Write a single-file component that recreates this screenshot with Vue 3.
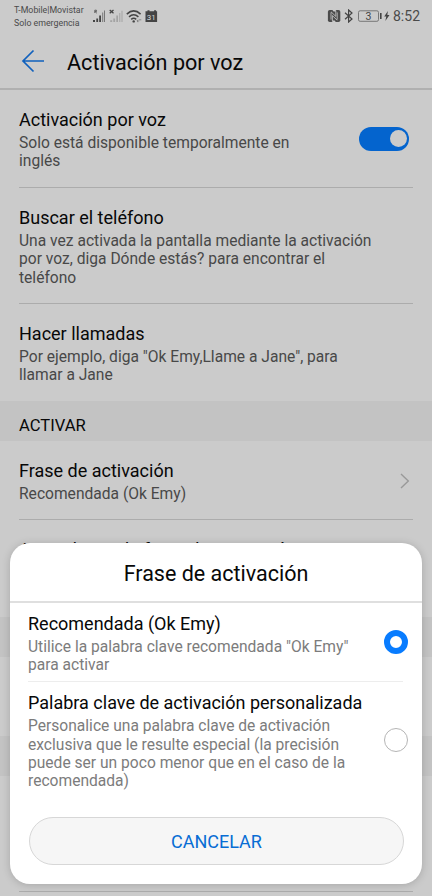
<script setup>
import { ref } from 'vue'

const enabled = ref(true)
const selected = ref('recommended')

const features = [
  { title: 'Activación por voz', lines: ['Solo está disponible temporalmente en', 'inglés'], toggle: true },
  { title: 'Buscar el teléfono', lines: ['Una vez activada la pantalla mediante la activación', 'por voz, diga Dónde estás? para encontrar el', 'teléfono'] },
  { title: 'Hacer llamadas', lines: ['Por ejemplo, diga "Ok Emy,Llame a Jane", para', 'llamar a Jane'] },
]

const options = [
  { id: 'recommended', title: 'Recomendada (Ok Emy)', lines: ['Utilice la palabra clave recomendada "Ok Emy"', 'para activar'] },
  { id: 'custom', title: 'Palabra clave de activación personalizada', lines: ['Personalice una palabra clave de activación', 'exclusiva que le resulte especial (la precisión', 'puede ser un poco menor que en el caso de la', 'recomendada)'] },
]
</script>

<template>
  <div class="screen">
    <header class="status">
      <div class="carrier"><span>T-Mobile|Movistar</span><span>Solo emergencia</span></div>
      <svg class="signals" width="68" height="16" viewBox="0 0 68 16">
        <g fill="#444">
          <path d="M1 11h2v2H1zM4.3 9.5h1.8V13H4.3zM7.2 6.5H9V13H7.2z" />
          <path d="M10.2 3.5h1V13h-1z" fill="#777" /><path d="M12 1.5h1V13h-1z" fill="#777" />
          <path d="M2.8 4V1.2h1.6v1.4H3.2L4.8 4.2" fill="none" stroke="#555" stroke-width=".9" />
        </g>
        <path d="M17.7 1l3.8 3.2M21.5 1l-3.8 3.2" stroke="#444" stroke-width="1.3" />
        <path d="M18.2 11.2h2V13h-2zM21.3 9.5h1.8V13h-1.8zM24.3 6.5H26V13h-1.7zM27.3 4h1v9h-1zM29.5 1.8h1V13h-1z" fill="#a3a3a3" />
        <g fill="none" stroke="#444" stroke-width="1.5">
          <path d="M34.8 5.1Q41.7-1.3 48.6 5.1M37 7.9Q41.7 3.7 46.4 7.9M39.2 10.4Q41.7 8.2 44.2 10.4" />
        </g>
        <circle cx="41.7" cy="12.4" r="1.2" fill="#444" />
        <path d="M45 12h2.2M46.1 10.8L44.9 12l1.2 1.2M49.3 10.8h-2.2" stroke="#777" stroke-width=".8" fill="none" />
        <path d="M53.5 2.2h2V1.2h2v1h4.6v-1h2v1h1V13H53.5z" fill="#444" />
        <text x="59.3" y="10.7" text-anchor="middle" class="day">31</text>
      </svg>
      <div class="right">
        <svg width="64" height="14" viewBox="0 0 64 14">
          <rect x=".9" y="1" width="12.4" height="12" rx="1.8" fill="#4b4b4b" />
          <path d="M5.4 .9h3.4v1.5H6.6zM5.4 13.1h3.4l-1.2-1.5H5.4z" fill="#cbcbcb" />
          <path d="M4 10.6V3.4M5.4 12.5V6.6l4.8 4.6M10.2 10.6V3.4M8.8 1.5v5.9L4 2.8" fill="none" stroke="#cbcbcb" stroke-width=".8" />
          <path d="M18 3.7l7 6.3-3.4 3V1L25 4l-7 6.3" fill="none" stroke="#444" stroke-width="1.2" />
          <rect x="31.5" y="1.8" width="20" height="10.5" rx="1.6" fill="none" stroke="#777" stroke-width="1" />
          <path d="M53 4h1.6v6H53z" fill="#444" />
          <path d="M60.9 2l-3.7 5.5h2.1L58.3 12l4.2-6h-2.2z" fill="#444" />
          <text x="41.5" y="10.8" text-anchor="middle" class="charge">3</text>
        </svg>
        <span class="clock">8:52</span>
      </div>
    </header>
    <div class="appbar">
      <svg width="24" height="24" viewBox="0 0 24 24"><path d="M23 12H2M12.5 1.5L2 12l10.5 10.5" fill="none" stroke="#1161bd" stroke-width="1.7" /></svg>
      <h1>Activación por voz</h1>
    </div>

    <main>
      <section v-for="(f, i) in features" :key="f.title" class="row" :class="'feature-' + i">
        <div>
          <h2>{{ f.title }}</h2>
          <p v-for="line in f.lines" :key="line">{{ line }}</p>
        </div>
        <button v-if="f.toggle" class="switch" :class="{ on: enabled }" @click="enabled = !enabled"><i></i></button>
      </section>
      <div class="band label">ACTIVAR</div>
      <section class="row phrase">
        <div><h2>Frase de activación</h2><p>Recomendada (Ok Emy)</p></div>
        <svg width="12" height="18" viewBox="0 0 12 18"><path d="M2 2l7.3 7L2 16" fill="none" stroke="#999" stroke-width="1.4" /></svg>
      </section>
      <section class="row learn"><h2>Aprendizaje de frase de activación</h2></section>
      <div class="band"></div>
      <div class="gap"></div>
      <div class="band"></div>
      <div class="row last"></div>
    </main>

    <div class="dialog">
      <h3>Frase de activación</h3>
      <div class="options">
        <div v-for="o in options" :key="o.id" class="option" @click="selected = o.id">
          <div class="text">
            <h2>{{ o.title }}</h2>
            <p v-for="line in o.lines" :key="line">{{ line }}</p>
          </div>
          <span class="radio" :class="{ checked: selected === o.id }"></span>
        </div>
      </div>
      <button class="cancel">CANCELAR</button>
    </div>
  </div>
</template>

<style>
body { margin: 0; }
</style>

<style scoped>
* { box-sizing: border-box; }
.screen { position: relative; width: 432px; height: 896px; overflow: hidden; background: #cbcbcb; font-family: Roboto, "Liberation Sans", sans-serif; color: #080808; }
h1, h2, h3, p { margin: 0; font-weight: 400; white-space: nowrap; }
h2 { font-size: 18px; line-height: 22px; margin-bottom: 3px; }
p { font-size: 15.6px; line-height: 18.4px; color: #484848; }
button { border: 0; padding: 0; font-family: inherit; }
.status { height: 34px; display: flex; align-items: flex-start; padding: 4px 12px 0 14px; color: #4a4a4a; }
.carrier { width: 70px; display: flex; flex-direction: column; font-size: 8.8px; line-height: 13px; white-space: nowrap; }
.signals { margin: 5px 0 0 8px; }
.day { font-size: 8px; fill: #d8d8d8; }
.right { margin-left: auto; display: flex; align-items: center; gap: 2px; height: 24px; }
.charge { font-size: 10.5px; fill: #444; }
.clock { font-size: 14px; }
.appbar { height: 56px; display: flex; align-items: center; padding: 0 0 0 21px; border-bottom: 2px solid #b0b0b0; }
h1 { font-size: 21.6px; margin-left: 22px; line-height: 26px; padding-top: 3px; }
.row { margin: 0 19px; display: flex; justify-content: space-between; border-bottom: 1px solid #acacac; }
.feature-0 { height: 98px; padding-top: 19px; }
.feature-1 { height: 116px; padding-top: 19px; }
.feature-2 { height: 97px; padding-top: 19px; border: 0; }
.switch { width: 50px; height: 24px; margin: 18px 4px 0 0; border-radius: 12px; background: #888; padding: 3px 2px 3px 3px; display: flex; }
.switch i { width: 17px; height: 17px; border-radius: 50%; background: #cbcbcb; }
.switch.on { background: #0464ce; justify-content: flex-end; }
.band { height: 40px; background: #c3c3c3; }
.label { padding: 14px 19px 0; font-size: 16.6px; line-height: 22px; }
.phrase { height: 79px; padding-top: 19px; }
.phrase svg { margin: 12px 2px 0 0; }
.learn { height: 97px; padding-top: 19px; border: 0; }
.learn h2 { letter-spacing: .1px; }
.gap { height: 79px; }
.last { height: 116px; }
.dialog { position: absolute; left: 10px; top: 543px; width: 412px; height: 341px; border-radius: 20px; background: #fff; box-shadow: 0 1px 8px rgba(0, 0, 0, .18); }
.dialog h3 { height: 60px; line-height: 60px; font-size: 21.5px; text-align: center; border-bottom: 2px solid #dfdfdf; padding-top: 1px; }
.options { padding: 0 14px 0 18px; }
.option { display: flex; justify-content: space-between; align-items: center; height: 79px; background: linear-gradient(#ededed, #ededed) 0 100% / 375px 1px no-repeat; }
.option:last-child { height: 117px; background: none; }
.text { padding-top: 2px; }
.option p { color: #7c7c7c; }
.radio { flex: none; width: 24px; height: 24px; margin-bottom: 2px; border: 1px solid #b5b5b5; border-radius: 50%; }
.radio.checked { border: 6px solid #087cff; }
.cancel { display: block; width: 375px; height: 48px; margin: 18px 0 0 19px; border: 1px solid #d7d7d7; border-radius: 24px; background: #f6f6f6; color: #086dd4; font-size: 18px; }
</style>
